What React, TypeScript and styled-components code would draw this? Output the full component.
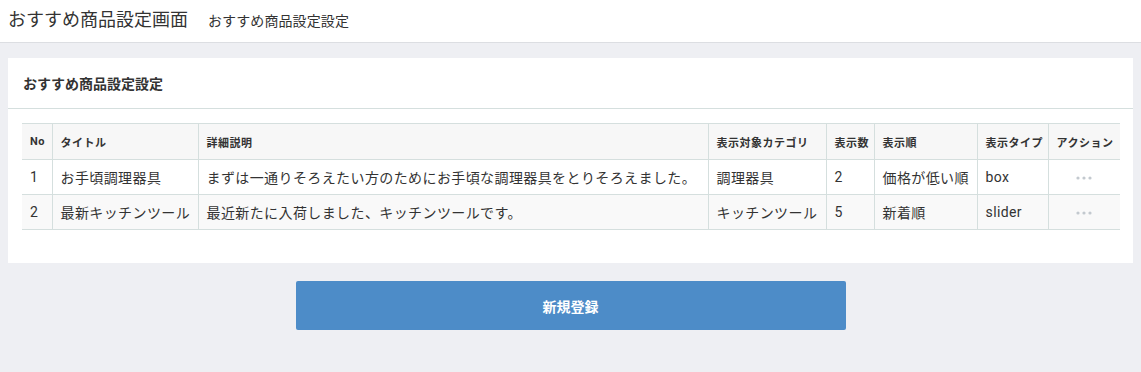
import React from "react";
import styled, { createGlobalStyle } from "styled-components";

const GlobalStyle = createGlobalStyle`
  html, body {
    margin: 0;
    padding: 0;
    background: #eeeff3;
    font-family: Roboto, "Noto Sans CJK JP", sans-serif;
    color: #333;
  }
  * { box-sizing: border-box; }
`;

const Page = styled.div`
  min-height: 372px;
  background: #eeeff3;
`;

const TopBar = styled.header`
  height: 43px;
  background: #fff;
  border-bottom: 1px solid #dcdee2;
  display: flex;
  align-items: center;
  padding: 0 8px 2px;
  gap: 20px;
`;

const PageTitle = styled.h1`
  margin: 0;
  font-size: 18px;
  font-weight: 400;
  color: #333;
  line-height: 1;
`;

const Crumb = styled.span`
  font-size: 14px;
  color: #333;
  line-height: 1;
  padding-top: 2px;
  letter-spacing: 0.1px;
`;

const Main = styled.main`
  padding: 15px 8px 0;
  display: flex;
  flex-direction: column;
  align-items: center;
`;

const Card = styled.section`
  width: 100%;
  background: #fff;
`;

const CardHeader = styled.div`
  height: 51px;
  border-bottom: 1px solid #d5dfde;
  display: flex;
  align-items: center;
  padding: 0 15px 0;
  font-size: 14px;
  font-weight: 700;
`;

const CardBody = styled.div`
  padding: 14px 14px 33px;
`;

const Table = styled.table`
  width: 100%;
  border-collapse: collapse;
  table-layout: fixed;
`;

const Th = styled.th<{ $w: number }>`
  width: ${(p) => p.$w}px;
  background: #f7f7f7;
  font-size: 11px;
  font-weight: 700;
  text-align: left;
  padding: 0 8px;
  height: 36px;
  border: 1px solid #d5dfde;
  color: #333;
  white-space: nowrap;
  letter-spacing: 0.5px;
  &:first-child { border-left: none; }
  &:last-child { border-right: none; }
`;

const Tr = styled.tr<{ $striped?: boolean }>`
  background: ${(p) => (p.$striped ? "#f9f9f9" : "#fff")};
`;

const Td = styled.td<{ $center?: boolean }>`
  font-size: 14px;
  height: 35px;
  padding: 0 8px;
  border: 1px solid #d5dfde;
  white-space: nowrap;
  letter-spacing: 0.4px;
  text-align: ${(p) => (p.$center ? "center" : "left")};
  color: #333;
  &:first-child { border-left: none; }
  &:last-child { border-right: none; }
`;

const Dots = styled.svg`
  display: inline-block;
  vertical-align: middle;
`;

const PrimaryButton = styled.button`
  margin-top: 18px;
  width: 550px;
  height: 49px;
  border: none;
  border-radius: 2px;
  background: #4d8cc8;
  color: #fff;
  font-family: Roboto, "Noto Sans CJK JP", sans-serif;
  font-size: 14px;
  font-weight: 700;
  cursor: pointer;
`;

const columns = [
  { label: "No", w: 30 },
  { label: "タイトル", w: 146 },
  { label: "詳細説明", w: 510 },
  { label: "表示対象カテゴリ", w: 118 },
  { label: "表示数", w: 48 },
  { label: "表示順", w: 103 },
  { label: "表示タイプ", w: 71 },
  { label: "アクション", w: 72 },
];

const rows = [
  {
    no: "1",
    title: "お手頃調理器具",
    desc: "まずは一通りそろえたい方のためにお手頃な調理器具をとりそろえました。",
    cat: "調理器具",
    count: "2",
    order: "価格が低い順",
    type: "box",
  },
  {
    no: "2",
    title: "最新キッチンツール",
    desc: "最近新たに入荷しました、キッチンツールです。",
    cat: "キッチンツール",
    count: "5",
    order: "新着順",
    type: "slider",
  },
];

const MoreIcon = () => (
  <Dots width="16" height="4" viewBox="0 0 16 4">
    <circle cx="2" cy="2" r="1.6" fill="#c3c9cf" />
    <circle cx="8" cy="2" r="1.6" fill="#c3c9cf" />
    <circle cx="14" cy="2" r="1.6" fill="#c3c9cf" />
  </Dots>
);

export default function App() {
  return (
    <Page>
      <GlobalStyle />
      <TopBar>
        <PageTitle>おすすめ商品設定画面</PageTitle>
        <Crumb>おすすめ商品設定設定</Crumb>
      </TopBar>
      <Main>
        <Card>
          <CardHeader>おすすめ商品設定設定</CardHeader>
          <CardBody>
            <Table>
              <thead>
                <tr>
                  {columns.map((c) => (
                    <Th key={c.label} $w={c.w}>
                      {c.label}
                    </Th>
                  ))}
                </tr>
              </thead>
              <tbody>
                {rows.map((r, i) => (
                  <Tr key={r.no} $striped={i % 2 === 1}>
                    <Td>{r.no}</Td>
                    <Td>{r.title}</Td>
                    <Td>{r.desc}</Td>
                    <Td>{r.cat}</Td>
                    <Td>{r.count}</Td>
                    <Td>{r.order}</Td>
                    <Td>{r.type}</Td>
                    <Td $center>
                      <MoreIcon />
                    </Td>
                  </Tr>
                ))}
              </tbody>
            </Table>
          </CardBody>
        </Card>
        <PrimaryButton>新規登録</PrimaryButton>
      </Main>
    </Page>
  );
}
